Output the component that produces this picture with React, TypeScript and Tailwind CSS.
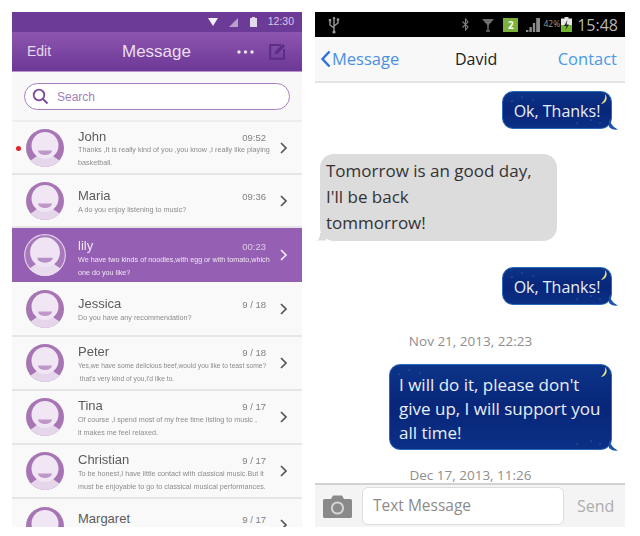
import React, { useId } from "react";

type Conv = { name: string; time: string; lines: string[]; h: string; small?: boolean };

const convs: Conv[] = [
  { name: "John", time: "09:52", lines: ["Thanks ,It is really kind of you ,you know ,I really like playing", "basketball."], h: "h-[53px]" },
  { name: "Maria", time: "09:36", lines: ["A do you enjoy listening to music?"], h: "h-[53px]" },
  { name: "lily", time: "00:23", lines: ["We have two kinds of noodles,with egg or with tomato,which", "one do you like?"], h: "h-[54px]" },
  { name: "Jessica", time: "9 / 18", lines: ["Do you have any recommendation?"], h: "h-[55px]" },
  { name: "Peter", time: "9 / 18", lines: ["Yes,we have some delicious beef,would you like to teast some?", " that's very kind of you,I'd like to."], h: "h-[54px]", small: true },
  { name: "Tina", time: "9 / 17", lines: ["Of course ,I spend most of my free time listing to music ,", "it makes me feel relaxed."], h: "h-[54px]" },
  { name: "Christian", time: "9 / 17", lines: ["To be honest,I have little contact with classical music.But it", "must be enjoyable to go to classical musical performances."], h: "h-[54px]" },
];

function Avatar({ selected }: { selected?: boolean }) {
  const id = useId();
  return (
    <svg width={selected ? 42 : 38} height={selected ? 42 : 38} viewBox="0 0 38 38" className={selected ? "shrink-0 -mx-[2px]" : "shrink-0"}>
      <defs>
        <clipPath id={id}>
          <circle cx="19" cy="19" r="19" />
        </clipPath>
      </defs>
      <circle cx="19" cy="19" r={selected ? 18.4 : 19} fill={selected ? "#a878bd" : "#a775b4"} stroke={selected ? "#e3d2ea" : "none"} strokeWidth="1" />
      <g clipPath={`url(#${id})`}>
        <path d="M2 33 Q9 29 12 26 H26 Q29 29 36 33 L30 40 H8 Z" fill={selected ? "#e9dcef" : "#e6d6ec"} />
        <circle cx="19" cy="16.5" r="13.5" fill={selected ? "#efe4f3" : "#f0e6f4"} />
        <path d="M12 21.5 H26 A7 4.5 0 0 1 12 21.5 Z" fill={selected ? "#b48ec4" : "#bd98c8"} />
      </g>
    </svg>
  );
}

function Chevron({ white }: { white?: boolean }) {
  return (
    <svg width="9" height="14" viewBox="0 0 9 14" className="shrink-0">
      <path d="M2 2 L7 7 L2 12" fill="none" stroke={white ? "#f3ecf6" : "#555"} strokeWidth="1.7" />
    </svg>
  );
}

function Row({ c, index }: { c: Conv; index: number }) {
  const sel = c.name === "lily";
  return (
    <div className={`relative flex items-center shrink-0 pl-[14px] ${c.h} ${sel ? "bg-[#9560b3]" : "bg-[#f9f9f9] border-b-2 border-[#e6e6e6]"}`}>
      {index === 0 && <span className="absolute left-[4px] top-[24px] h-[5px] w-[5px] rounded-full bg-[#e0242c]" />}
      <Avatar selected={sel} />
      <div className={`ml-[14px] flex h-full w-[195px] flex-col justify-center ${sel ? "pt-[5px]" : "pt-[1px]"}`}>
        <div className="mb-[-2px] mt-[2px] flex items-baseline justify-between pr-[7px]">
          <span className={`text-[13px] leading-[16px] ${sel ? "text-[#f0e6f4]" : "text-[#5c5c5c]"}`}>{c.name}</span>
          <span className={`text-[9.5px] ${sel ? "text-[#ddcde6]" : "text-[#808080]"}`}>{c.time}</span>
        </div>
        {c.lines.map((l, i) => (
          <div key={i} className={`whitespace-pre leading-[12px] mt-[1px] ${c.small ? "text-[6.7px]" : "text-[7.2px]"} ${sel ? "text-[#efe6f4]" : "text-[#8c8c8c]"}`}>{l}</div>
        ))}
      </div>
      <div className="ml-[6px]">
        <Chevron white={sel} />
      </div>
    </div>
  );
}

function LastRow() {
  return (
    <div className="flex h-[28px] shrink-0 items-start overflow-hidden bg-[#f9f9f9] pl-[14px] pt-[8px]">
      <Avatar />
      <div className="ml-[14px] flex w-[195px] items-baseline justify-between pr-[7px] pt-[4px]">
        <span className="text-[13px] leading-[16px] text-[#5c5c5c]">Margaret</span>
        <span className="text-[9.5px] text-[#808080]">9 / 17</span>
      </div>
      <div className="ml-[6px] mt-[11px]">
        <Chevron />
      </div>
    </div>
  );
}

function LeftPhone() {
  return (
    <div className="flex w-[290px] flex-col overflow-hidden bg-[#f8f8f8] font-['Liberation_Sans',sans-serif]">
      <div className="flex h-[20px] shrink-0 items-center justify-end gap-[11px] bg-[#6c3a97] pr-[8px]">
        <svg width="10" height="8" viewBox="0 0 10 8"><path d="M0 0 H10 L5 8 Z" fill="#f4eef8" /></svg>
        <svg width="10" height="9" viewBox="0 0 10 9"><path d="M0 9 L9 0 V9 Z" fill="#b9a0cc" /></svg>
        <svg width="7" height="10" viewBox="0 0 7 10"><path d="M2 0 H5 V1 H7 V10 H0 V1 H2 Z" fill="#e4d9ec" /></svg>
        <span className="text-[10.5px] text-[#d9c9e6]">12:30</span>
      </div>
      <div className="flex h-[40px] shrink-0 items-center justify-between border-b border-[#b795c9] bg-gradient-to-b from-[#8d55ae] to-[#6c3897] pl-[15px] pr-[16px]">
        <span className="w-[76px] text-[14px] text-[#e6d9ee]">Edit</span>
        <span className="text-[17px] text-[#eadff1]">Message</span>
        <div className="flex w-[76px] items-center justify-end gap-[15px]">
          <svg width="17" height="4" viewBox="0 0 17 4">
            <circle cx="2" cy="2" r="1.7" fill="#eee6f3" />
            <circle cx="8.5" cy="2" r="1.7" fill="#eee6f3" />
            <circle cx="15" cy="2" r="1.7" fill="#eee6f3" />
          </svg>
          <svg width="17" height="17" viewBox="0 0 17 17">
            <path d="M12 2 H1.2 V15.8 H15 V6" fill="none" stroke="#5b2e85" strokeWidth="2" />
            <path d="M5.5 11.5 L6.5 8 L14 1 L16 3 L9 10.5 Z" fill="#5b2e85" />
          </svg>
        </div>
      </div>
      <div className="flex h-[50px] shrink-0 items-center border-b-2 border-[#eeeeee] px-[12px] pt-[1px]">
        <div className="flex h-[27px] w-[266px] items-center gap-[8px] rounded-full border-[1.5px] border-[#a87fc0] bg-white pl-[7px]">
          <svg width="17" height="17" viewBox="0 0 17 17">
            <circle cx="7" cy="7" r="5.3" fill="none" stroke="#7b4a9e" strokeWidth="1.8" />
            <path d="M11 11 L15.5 15.5" stroke="#7b4a9e" strokeWidth="2" />
          </svg>
          <span className="text-[12px] text-[#a37fbb]">Search</span>
        </div>
      </div>
      {convs.map((c, i) => (
        <Row key={c.name} c={c} index={i} />
      ))}
      <LastRow />
    </div>
  );
}

function Bubble({ children, className }: { children: React.ReactNode; className: string }) {
  return (
    <div className={`relative self-end mr-[13px] rounded-[11px] border border-[#2a68b8] bg-gradient-to-b from-[#0c3488] via-[#08267a] to-[#0b3086] text-[#e9eff8] ${className}`}>
      {children}
      <svg width="9" height="11" viewBox="0 0 9 11" className="absolute -right-[7px] bottom-[-2px]">
        <path d="M0 0 C2 5 4 8 9 10.5 C5 11 2 10 0 8 Z" fill="#1a54a8" />
      </svg>
      <svg width="9" height="11" viewBox="0 0 9 11" className="absolute right-[2px] top-[2px]">
        <path d="M5 0 C8 3 7 9 1 10 C4 7 6 4 5 0 Z" fill="#f0e28a" />
      </svg>
      <svg width="26" height="10" viewBox="0 0 26 10" className="absolute left-[6px] top-[3px]">
        <circle cx="3" cy="6" r="0.6" fill="#5f8fd2" />
        <circle cx="13" cy="2" r="0.5" fill="#5f8fd2" />
        <circle cx="24" cy="5" r="0.5" fill="#5f8fd2" />
      </svg>
      <svg width="30" height="8" viewBox="0 0 30 8" className="absolute right-[8px] bottom-[2px]">
        <circle cx="4" cy="5" r="0.5" fill="#5f8fd2" />
        <circle cx="18" cy="2" r="0.6" fill="#5f8fd2" />
        <circle cx="27" cy="5" r="0.5" fill="#5f8fd2" />
      </svg>
    </div>
  );
}

function RightPhone() {
  return (
    <div className="flex w-[310px] flex-col overflow-hidden bg-white font-['Open_Sans',sans-serif]">
      <div className="flex h-[25px] shrink-0 items-center bg-black pl-[13px] pr-[7px]">
        <svg width="12" height="18" viewBox="0 0 12 18">
          <path d="M6 1 V17 M6 12 L2 9 V5 M6 10 L10 7 V4.5" fill="none" stroke="#9a9a9a" strokeWidth="1.4" />
          <path d="M4.5 3 L6 0.5 L7.5 3 Z" fill="#9a9a9a" />
          <rect x="0.8" y="3" width="2.4" height="2.4" fill="#9a9a9a" />
          <rect x="8.8" y="2.4" width="2.4" height="2.4" fill="#9a9a9a" />
          <circle cx="6" cy="16" r="1.6" fill="#9a9a9a" />
        </svg>
        <div className="ml-auto flex items-center">
          <svg width="7" height="13" viewBox="0 0 7 13">
            <path d="M0.5 3.5 L6 9 L3.5 12 V1 L6 4 L0.5 9.5" fill="none" stroke="#7c7c7c" strokeWidth="1.1" />
          </svg>
          <svg width="12" height="14" viewBox="0 0 12 14" className="ml-[13px]">
            <path d="M0 1 H12 L6 8 Z" fill="#6c6c6c" />
            <path d="M6 7 V13 M4 13 H8" stroke="#6c6c6c" strokeWidth="1.4" />
          </svg>
          <span className="ml-[9px] flex h-[14px] w-[15px] items-center justify-center bg-[#7bb13a] text-[10px] font-bold leading-none text-white">2</span>
          <svg width="15" height="15" viewBox="0 0 15 15" className="ml-[8px]">
            <path d="M0 15 V13 H2.4 V15 Z M3.4 15 V10 H5.8 V15 Z M6.8 15 V6 H9.2 V15 Z M10.2 15 V1 H14 V15 Z" fill="#8b8b8b" />
          </svg>
          <span className="ml-[2px] text-[8.5px] leading-none text-[#9a9a9a]">42%</span>
          <svg width="11" height="15" viewBox="0 0 11 15" className="ml-[1px]">
            <rect x="3.5" y="0" width="4" height="2" fill="#ddd" />
            <rect x="0" y="1.5" width="11" height="13.5" fill="#e8e8e8" />
            <rect x="0" y="8" width="11" height="7" fill="#6fb52f" />
            <path d="M6.5 3 L3 9 H5.5 L4.5 13 L8 7.5 H5.5 Z" fill="#222" />
          </svg>
          <span className="ml-[5px] text-[16px] leading-none text-[#b5b5b5]">15:48</span>
        </div>
      </div>
      <div className="relative flex h-[46px] shrink-0 items-center justify-between border-b-2 border-[#e4e4e4] bg-[#f8f8f8] pl-[5px] pr-[8px]">
        <div className="flex items-center text-[16.5px] text-[#4a90e2]">
          <svg width="11" height="18" viewBox="0 0 11 18">
            <path d="M9.5 1.5 L2.5 9 L9.5 16.5" fill="none" stroke="#2f6fe0" strokeWidth="2.4" />
          </svg>
          <span className="ml-[1px]">Message</span>
        </div>
        <span className="absolute left-[140px] text-[16px] font-medium text-[#222]">David</span>
        <span className="text-[16.5px] text-[#4a98e6]">Contact</span>
      </div>
      <div className="flex min-h-0 flex-1 flex-col overflow-hidden">
        <Bubble className="mt-[8px] flex h-[38px] w-[110px] shrink-0 items-center justify-center pt-[1px] text-[16px]">Ok, Thanks!</Bubble>
        <div className="relative ml-[5px] mt-[25px] h-[87px] w-[237px] shrink-0 rounded-[14px] bg-[#dcdcdc] pl-[6px] pt-[4px] text-[17px] leading-[26px] text-[#333]">
          <div>Tomorrow is an good day,</div>
          <div>I'll be back</div>
          <div>tommorrow!</div>
          <svg width="10" height="9" viewBox="0 0 10 9" className="absolute -left-[4px] bottom-0">
            <path d="M10 0 V8.5 H0 C3 8 4 5 4 1 Z" fill="#dcdcdc" />
          </svg>
        </div>
        <Bubble className="mt-[26px] flex h-[38px] w-[110px] shrink-0 items-center justify-center pt-[1px] text-[16px]">Ok, Thanks!</Bubble>
        <div className="mt-[26px] h-[20px] shrink-0 pl-[1px] text-center text-[13.5px] font-medium leading-[20px] text-[#8e8e8e]">Nov 21, 2013, 22:23</div>
        <Bubble className="mt-[13px] h-[86px] w-[223px] shrink-0 pl-[9px] pt-[8px] text-[17px] leading-[24px]">
          <div>I will do it, please don't</div>
          <div>give up, I will support you</div>
          <div>all time!</div>
        </Bubble>
        <div className="mt-[15px] h-[20px] shrink-0 pl-[1px] text-center text-[13.5px] font-medium leading-[20px] text-[#8e8e8e]">Dec 17, 2013, 11:26</div>
      </div>
      <div className="flex h-[44px] shrink-0 items-center border-t-2 border-[#d2d2d2] bg-[#f4f4f4] pl-[8px]">
        <svg width="29" height="24" viewBox="0 0 29 24" className="shrink-0">
          <path d="M1.5 5 H8 L10 1.5 H19 L21 5 H27.5 Q29 5 29 6.5 V22.5 Q29 24 27.5 24 H1.5 Q0 24 0 22.5 V6.5 Q0 5 1.5 5 Z" fill="#8a8a8a" />
          <circle cx="14.5" cy="14" r="6.6" fill="#d5d5d5" />
          <circle cx="14.5" cy="14" r="4.6" fill="#8a8a8a" />
        </svg>
        <div className="ml-[10px] flex h-[38px] w-[202px] items-center rounded-[6px] border border-[#dddddd] bg-white pl-[10px] text-[15.5px] text-[#8c8c8c]">Text Message</div>
        <span className="ml-[13px] text-[16px] text-[#adadad]">Send</span>
      </div>
    </div>
  );
}

export default function App() {
  return (
    <div className="h-[536px] w-[640px] overflow-hidden bg-white">
      <div className="flex h-[527px] gap-[13px] pl-[12px] pt-[12px] blur-[0.45px]">
        <LeftPhone />
        <RightPhone />
      </div>
    </div>
  );
}
